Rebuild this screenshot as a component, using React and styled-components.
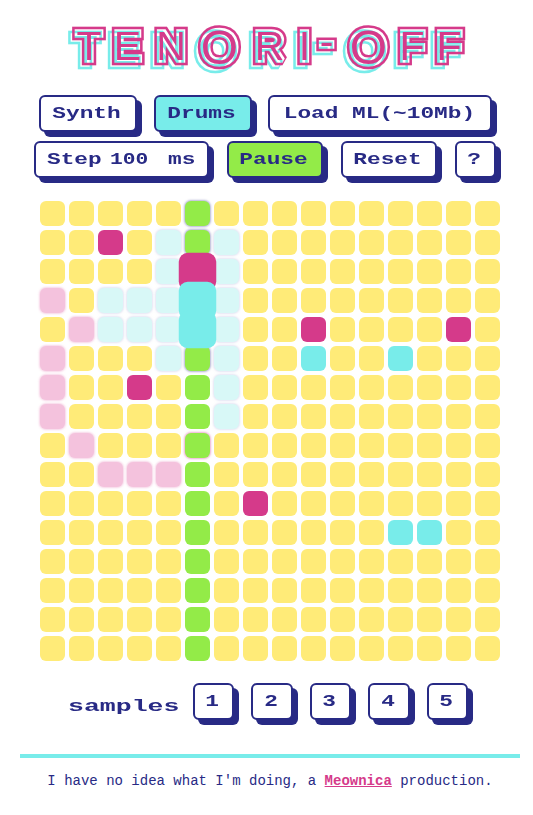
import styled, {createGlobalStyle} from "styled-components"

const navy = "#282a85"

const GlobalStyle = createGlobalStyle`
  html, body{
    margin: 0;
    padding: 0;
    background: #fff;
  }
  body{
    font-family: "Liberation Mono", monospace;
    color: ${navy};
  }
`

const Page = styled.div`
  width: 500px;
  margin-left: 20px;
`

const TitleArt = styled.svg`
  display: block;
  width: 500px;
  height: 95px;
`

const TitleWord = styled.text`
  text-anchor: middle;
  stroke-linejoin: miter;
  stroke-miterlimit: 2;
`

const Controls = styled.div`
  display: flex;
  flex-direction: column;
  gap: 9px;
  padding-right: 10px;
`

const Row = styled.div`
  display: flex;
  justify-content: center;
  gap: ${p => p.$gap}px;
  padding-left: ${p => p.$pad || 0}px;
`

const Button = styled.button`
  box-sizing: border-box;
  width: ${p => p.$w}px;
  height: 37px;
  padding: 0 2px 0 0;
  display: flex;
  align-items: center;
  justify-content: center;
  background: ${p => p.$bg || "#fff"};
  border: 2px solid ${navy};
  border-radius: 6px;
  box-shadow: 5px 5px 0 ${navy};
  color: ${navy};
  font-family: "Liberation Mono", monospace;
  font-weight: 700;
`

const Stretch = styled.span`
  display: inline-block;
  white-space: pre;
  font-size: ${p => p.$size || 17}px;
  font-weight: 700;
  transform: scaleX(${p => p.$sx || 1.34});
`

const StepBox = styled(Button).attrs({as: "div"})`
  position: relative;
  justify-content: flex-start;
  padding-left: 11px;
`

const StepLabel = styled(Stretch)`
  width: 56px;
  transform-origin: left center;
`

const StepInput = styled.input`
  width: 32px;
  margin-left: 7px;
  padding: 0;
  border: none;
  outline: none;
  background: none;
  color: ${navy};
  font-family: "Liberation Mono", monospace;
  font-size: 17px;
  font-weight: 700;
  transform: scaleX(1.25);
  transform-origin: left center;
`

const StepUnit = styled(StepLabel)`
  width: 28px;
  margin-left: 26px;
`

const Grid = styled.div`
  display: grid;
  grid-template-columns: repeat(16, 25px);
  grid-auto-rows: 25px;
  gap: 4px;
  margin: 23px 0 22px 20px;
`

const cellLook = {
  off: "background: #ffeb78;",
  head: "background: #93eb48;",
  headBlue: "background: #93eb48; box-shadow: 0 0 2px 1px rgba(40,42,133,.35);",
  headPink: "background: #93eb48; box-shadow: 0 0 2px 1px rgba(213,58,138,.4);",
  pink: "background: #d53a8a;",
  cyan: "background: #78ecea;",
  pinkFade: "background: #f4c2dd; box-shadow: 0 0 2px 1px rgba(244,194,221,.7);",
  cyanFade: "background: #d8f8f7; box-shadow: 0 0 2px 1px rgba(216,220,240,.7);",
  pinkBig: "background: #d53a8a; transform: scale(1.5); position: relative;",
  cyanBig: "background: #78ecea; transform: scale(1.5); position: relative;",
}

const Cell = styled.div`
  border-radius: 6px;
  ${p => cellLook[p.$look]}
`

const Samples = styled.div`
  display: flex;
  align-items: center;
  justify-content: center;
  gap: 17px;
  padding-right: 4px;
`

const SamplesLabel = styled.div`
  width: 111px;
  margin-right: -3px;
  margin-top: 9px;
`

const SampleText = styled(Stretch)`
  transform-origin: left center;
`

const Rule = styled.hr`
  height: 4px;
  margin: 34px 0 0;
  border: none;
  background: #78ecea;
`

const Footer = styled.p`
  margin: 15px 0 0;
  text-align: center;
  font-size: 14px;
  line-height: 16px;
  a{
    color: #d53a8a;
    font-weight: 700;
  }
`

const notes = {
  "1,2": "pink", "4,9": "pink", "4,14": "pink", "6,3": "pink", "10,7": "pink",
  "5,9": "cyan", "5,12": "cyan", "11,12": "cyan", "11,13": "cyan",
  "1,4": "cyanFade", "1,6": "cyanFade", "2,4": "cyanFade", "2,6": "cyanFade",
  "3,2": "cyanFade", "3,3": "cyanFade", "3,4": "cyanFade", "3,6": "cyanFade",
  "4,2": "cyanFade", "4,3": "cyanFade", "4,4": "cyanFade", "4,6": "cyanFade",
  "5,4": "cyanFade", "5,6": "cyanFade", "6,6": "cyanFade", "7,6": "cyanFade",
  "3,0": "pinkFade", "4,1": "pinkFade", "5,0": "pinkFade", "6,0": "pinkFade",
  "7,0": "pinkFade", "8,1": "pinkFade", "9,2": "pinkFade", "9,3": "pinkFade", "9,4": "pinkFade",
  "0,5": "headBlue", "1,5": "headBlue", "5,5": "headBlue", "8,5": "headPink",
  "2,5": "pinkBig", "3,5": "cyanBig", "4,5": "cyanBig",
}

const cells = []
for (let r = 0; r < 16; r++) {
  for (let c = 0; c < 16; c++) {
    cells.push(notes[r + "," + c] || (c === 5 ? "head" : "off"))
  }
}

// x is the centre of each letter, measured from the left edge of the page wrapper
const letters = [
  {ch: "T", x: 69, y: 60, size: 41},
  {ch: "E", x: 107.5, y: 60, size: 41},
  {ch: "N", x: 151, y: 60, size: 41},
  {ch: "O", x: 199.5, y: 64, size: 48},
  {ch: "R", x: 249.5, y: 60, size: 41},
  {ch: "I", x: 284.5, y: 60, size: 41},
  {ch: "-", x: 306.5, y: 55, size: 41},
  {ch: "O", x: 348.5, y: 64, size: 48},
  {ch: "F", x: 392, y: 60, size: 41},
  {ch: "F", x: 429, y: 60, size: 41},
]

function Title() {
  return (
    <TitleArt viewBox="0 0 500 95" role="img" aria-label="TENORI-OFF">
      <defs>
        <TitleWord id="word" fontFamily="'Liberation Sans', sans-serif" fontWeight="400" fontSize="41">
          {letters.map((l, i) => (
            <tspan key={i} x={l.x} y={l.y} fontSize={l.size}>{l.ch}</tspan>
          ))}
        </TitleWord>
        <mask id="lines" maskUnits="userSpaceOnUse" x="0" y="0" width="500" height="95">
          <use href="#word" fill="#fff" stroke="#fff" strokeWidth="10.5" />
          <use href="#word" fill="#000" stroke="#000" strokeWidth="5.5" />
          <use href="#word" fill="#fff" stroke="none" />
        </mask>
      </defs>
      <g transform="translate(-4 4)">
        <rect width="500" height="95" fill="#78ecea" mask="url(#lines)" />
      </g>
      <rect width="500" height="95" fill="#d53a8a" mask="url(#lines)" />
    </TitleArt>
  )
}

export default function App() {
  return (
    <Page>
      <GlobalStyle />
      <Title />
      <Controls>
        <Row $gap={16.5} $pad={1}>
          <Button $w={98}><Stretch>Synth</Stretch></Button>
          <Button $w={98} $bg="#78ecea"><Stretch>Drums</Stretch></Button>
          <Button $w={224}><Stretch>Load ML(~10Mb)</Stretch></Button>
        </Row>
        <Row $gap={18}>
          <StepBox $w={175}>
            <StepLabel>Step</StepLabel>
            <StepInput defaultValue="100" />
            <StepUnit>ms</StepUnit>
          </StepBox>
          <Button $w={96} $bg="#93eb48"><Stretch>Pause</Stretch></Button>
          <Button $w={96}><Stretch>Reset</Stretch></Button>
          <Button $w={41}><Stretch>?</Stretch></Button>
        </Row>
      </Controls>
      <Grid>
        {cells.map((look, i) => <Cell key={i} $look={look} />)}
      </Grid>
      <Samples>
        <SamplesLabel><SampleText $sx={1.56}>samples</SampleText></SamplesLabel>
        {[1, 2, 3, 4, 5].map(n => (
          <Button key={n} $w={41.5}><Stretch>{n}</Stretch></Button>
        ))}
      </Samples>
      <Rule />
      <Footer>I have no idea what I'm doing, a <a href="#meownica">Meownica</a> production.</Footer>
    </Page>
  )
}
